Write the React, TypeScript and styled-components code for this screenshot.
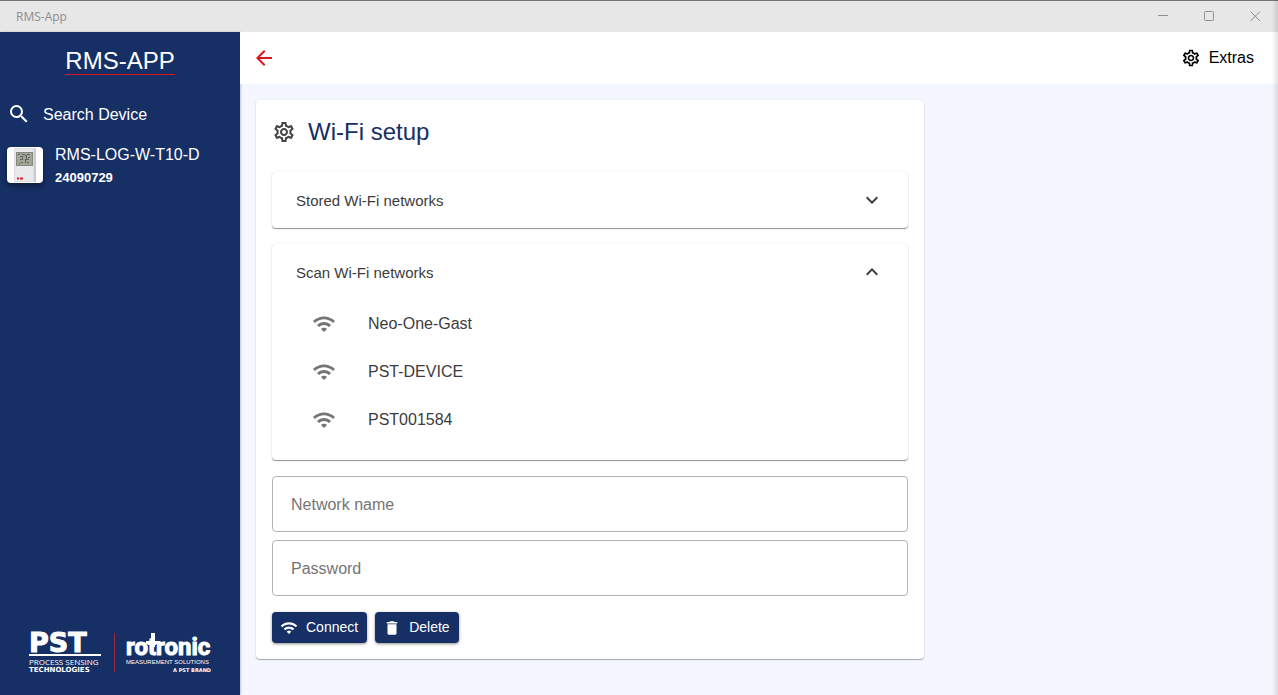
import React, { useState } from "react";
import styled, { createGlobalStyle } from "styled-components";
import {
  MdArrowBack,
  MdDelete,
  MdExpandLess,
  MdExpandMore,
  MdOutlineSettings,
  MdSearch,
  MdWifi,
} from "react-icons/md";

const NAVY = "#162f65";
const RED = "#d9161d";

const GlobalStyle = createGlobalStyle`
  * { box-sizing: border-box; }
  body {
    margin: 0;
    background: #f4f7ff;
    font-family: "Liberation Sans", Arial, sans-serif;
    font-size: 16px;
    color: #000;
  }
  button, input { font-family: inherit; }
`;

const Window = styled.div`
  min-height: 100vh;
  display: flex;
  flex-direction: column;
`;

const EdgeShade = styled.div`
  position: fixed;
  inset: 0 0 0 auto;
  width: 6px;
  pointer-events: none;
  background: linear-gradient(to right, rgba(0, 0, 0, 0), rgba(0, 0, 0, 0.12));
`;

const TitleBar = styled.header`
  height: 32px;
  display: flex;
  align-items: stretch;
  justify-content: space-between;
  border-top: 1px solid #777476;
  background: #e7e7e7;
  color: #8e8e8e;
`;

const WindowTitle = styled.span`
  padding-left: 16px;
  font: 12px/32px "Open Sans", "Noto Sans", sans-serif;
`;

const WindowControls = styled.div`
  display: flex;
`;

const WindowButton = styled.button`
  width: 46px;
  padding: 0;
  border: 0;
  background: none;
  color: inherit;
  display: grid;
  place-items: center;
`;

const Body = styled.div`
  flex: 1;
  display: flex;
`;

const Sidebar = styled.nav`
  width: 240px;
  flex: none;
  display: flex;
  flex-direction: column;
  background: ${NAVY};
  color: #fff;
  box-shadow: 1px 0 2px rgba(0, 0, 0, 0.2);
`;

const Brand = styled.div`
  align-self: center;
  margin-top: 16px;
  border-bottom: 1px solid ${RED};
  font-size: 24px;
  line-height: 26px;
`;

const SideLink = styled.a<{ $top: number }>`
  margin-top: ${(p) => p.$top}px;
  padding: 0 7px;
  display: flex;
  align-items: center;
  gap: 12px;
  color: inherit;
  text-decoration: none;
`;

const Thumb = styled.span`
  width: 36px;
  height: 36px;
  border-radius: 4px;
  background: #fff;
  box-shadow: 0 3px 5px rgba(0, 0, 0, 0.4);
  overflow: hidden;
`;

const LinkText = styled.span`
  display: flex;
  flex-direction: column;
  padding-top: 2px;
  line-height: 23px;
`;

const Serial = styled.strong`
  font-size: 13px;
`;

const Logos = styled.div`
  margin-top: auto;
  padding: 0 24px 20px;
  line-height: 0;
`;

const Main = styled.main`
  flex: 1;
  min-width: 0;
`;

const TopBar = styled.div`
  height: 52px;
  padding: 0 24px 0 12px;
  display: flex;
  align-items: center;
  justify-content: space-between;
  background: #fff;
`;

const PlainButton = styled.button`
  padding: 0;
  border: 0;
  background: none;
  display: flex;
  align-items: center;
  gap: 8px;
  font-size: 16px;
`;

const BackButton = styled(PlainButton)`
  color: ${RED};
`;

const Card = styled.section`
  width: calc(100% - 32px);
  max-width: 668px;
  margin: 16px;
  padding: 16px;
  border-radius: 4px;
  background: #fff;
  box-shadow: 0 1px 1px rgba(0, 0, 0, 0.3), 0 0 3px rgba(0, 0, 0, 0.08);
`;

const CardHeader = styled.div`
  display: flex;
  align-items: center;
  gap: 12px;
  margin-bottom: 24px;
  color: #444;
`;

const CardTitle = styled.h1`
  margin: 0;
  font-size: 24px;
  line-height: 32px;
  font-weight: 400;
  color: ${NAVY};
`;

const Panel = styled.section`
  margin-bottom: 16px;
  border-radius: 4px;
  background: #fff;
  box-shadow: 0 1px 1px rgba(0, 0, 0, 0.42), 0 0 2px rgba(0, 0, 0, 0.1);
`;

const PanelHeader = styled.button`
  width: 100%;
  height: 56px;
  padding: 0 24px;
  border: 0;
  background: none;
  display: flex;
  align-items: center;
  justify-content: space-between;
  font-size: 15px;
  color: #3c3c3c;
`;

const NetworkList = styled.ul`
  margin: 0;
  padding: 0 24px 16px;
  list-style: none;
`;

const NetworkButton = styled.button`
  width: 100%;
  height: 48px;
  padding: 0 16px;
  border: 0;
  background: none;
  display: flex;
  align-items: center;
  gap: 32px;
  font-size: 16px;
  color: #3c3c3c;

  svg { color: #757575; }
`;

const Fields = styled.div`
  display: flex;
  flex-direction: column;
  gap: 8px;
  margin-bottom: 16px;
`;

const TextField = styled.input`
  width: 100%;
  height: 56px;
  padding: 2px 18px 0;
  border: 1px solid #b4b4b4;
  border-radius: 4px;
  background: #fff;
  font-size: 16px;
  color: #222;

  &::placeholder { color: #757575; opacity: 1; }
`;

const Actions = styled.div`
  display: flex;
  gap: 8px;
`;

const ActionButton = styled.button`
  height: 31px;
  padding: 0 9px 0 8px;
  border: 0;
  border-radius: 4px;
  background: ${NAVY};
  color: #fff;
  box-shadow: 0 1px 3px rgba(0, 0, 0, 0.45);
  display: flex;
  align-items: center;
  gap: 8px;
  font-size: 14px;
`;

const ActionLabel = styled.span`
  padding-bottom: 2px;
`;

const DeviceImage = () => (
  <svg width="36" height="36" viewBox="0 0 36 36" aria-hidden="true">
    <rect x="7" y="1" width="22" height="34" rx="1" fill="#dcdce2" />
    <rect x="8" y="2" width="18" height="32" fill="#e8e8ed" />
    <rect x="27" y="2" width="2" height="33" fill="#c9c9d0" />
    <rect x="9" y="5" width="17" height="14" fill="#85897e" />
    <rect x="10" y="6" width="15" height="12" fill="#a2a698" />
    <path
      d="M11 7.5h2M15 7.5h3M20 7.5h3M13 9.5h3M15.5 9v4M18 8.5h2M19.5 9v3M21 10.5h2M13 12.5h3M18 12.5h4M14 15.5h2M18.5 13v3M20 15.5h2M12 16.5h1"
      stroke="#62665b"
      fill="none"
    />
    <path d="M10 31.5h2M13 31.5h3" stroke="#d0222a" strokeWidth="2" />
  </svg>
);

const LogoStrip = () => (
  <svg width="192" height="48" viewBox="0 0 192 48" fill="#fff" role="img" aria-label="PST and Rotronic">
    <text x="5" y="25" fontFamily="DejaVu Sans" fontWeight="700" fontSize="27" stroke="#fff" strokeWidth="1">
      PST
    </text>
    <rect x="5" y="27" width="72" height="2" />
    <text x="5" y="38" fontFamily="Open Sans" fontSize="8">PROCESS SENSING</text>
    <text x="5" y="45" fontFamily="DejaVu Sans" fontWeight="700" fontSize="7">TECHNOLOGIES</text>
    <rect x="90" y="6" width="1" height="39" fill="#a02a42" />
    <text x="102" y="28" fontFamily="Roboto" fontWeight="700" fontSize="24" stroke="#fff" strokeWidth="1">
      rotronic
    </text>
    <rect x="127" y="6" width="4" height="14" />
    <rect x="122" y="14" width="14" height="3" />
    <text x="102" y="37" fontFamily="Liberation Sans" fontSize="6">MEASUREMENT SOLUTIONS</text>
    <text x="187" y="45" textAnchor="end" fontFamily="DejaVu Sans" fontWeight="700" fontSize="5">A PST BRAND</text>
  </svg>
);

const NETWORKS = ["Neo-One-Gast", "PST-DEVICE", "PST001584"];

interface AccordionProps {
  title: string;
  initiallyOpen?: boolean;
  children?: React.ReactNode;
}

function Accordion({ title, initiallyOpen = false, children }: AccordionProps) {
  const [open, setOpen] = useState(initiallyOpen);
  return (
    <Panel>
      <PanelHeader type="button" aria-expanded={open} onClick={() => setOpen(!open)}>
        {title}
        {open ? <MdExpandLess size={24} /> : <MdExpandMore size={24} />}
      </PanelHeader>
      {open && children}
    </Panel>
  );
}

export default function App() {
  const [name, setName] = useState("");
  const [password, setPassword] = useState("");

  return (
    <Window>
      <GlobalStyle />
      <TitleBar>
        <WindowTitle>RMS-App</WindowTitle>
        <WindowControls>
          <WindowButton aria-label="Minimize">
            <svg width="11" height="11" stroke="currentColor"><path d="M0 4.5h10" /></svg>
          </WindowButton>
          <WindowButton aria-label="Maximize">
            <svg width="11" height="11" fill="none" stroke="currentColor">
              <rect x="0.5" y="0.5" width="9" height="9" rx="1" />
            </svg>
          </WindowButton>
          <WindowButton aria-label="Close">
            <svg width="11" height="11" stroke="currentColor"><path d="M0.5 0.5l9.5 9.5M10 0.5l-9.5 9.5" /></svg>
          </WindowButton>
        </WindowControls>
      </TitleBar>
      <Body>
        <Sidebar>
          <Brand>RMS-APP</Brand>
          <SideLink href="#search" $top={26}>
            <MdSearch size={24} />
            <LinkText>Search Device</LinkText>
          </SideLink>
          <SideLink href="#device" $top={15}>
            <Thumb><DeviceImage /></Thumb>
            <LinkText>
              RMS-LOG-W-T10-D
              <Serial>24090729</Serial>
            </LinkText>
          </SideLink>
          <Logos><LogoStrip /></Logos>
        </Sidebar>
        <Main>
          <TopBar>
            <BackButton aria-label="Back"><MdArrowBack size={24} /></BackButton>
            <PlainButton><MdOutlineSettings size={20} />Extras</PlainButton>
          </TopBar>
          <Card>
            <CardHeader>
              <MdOutlineSettings size={24} />
              <CardTitle>Wi-Fi setup</CardTitle>
            </CardHeader>
            <Accordion title="Stored Wi-Fi networks" />
            <Accordion title="Scan Wi-Fi networks" initiallyOpen>
              <NetworkList>
                {NETWORKS.map((network) => (
                  <li key={network}>
                    <NetworkButton type="button" onClick={() => setName(network)}>
                      <MdWifi size={24} />
                      {network}
                    </NetworkButton>
                  </li>
                ))}
              </NetworkList>
            </Accordion>
            <Fields>
              <TextField
                aria-label="Network name"
                placeholder="Network name"
                value={name}
                onChange={(e) => setName(e.target.value)}
              />
              <TextField
                type="password"
                aria-label="Password"
                placeholder="Password"
                value={password}
                onChange={(e) => setPassword(e.target.value)}
              />
            </Fields>
            <Actions>
              <ActionButton type="button"><MdWifi size={18} /><ActionLabel>Connect</ActionLabel></ActionButton>
              <ActionButton type="button"><MdDelete size={18} /><ActionLabel>Delete</ActionLabel></ActionButton>
            </Actions>
          </Card>
        </Main>
      </Body>
      <EdgeShade />
    </Window>
  );
}
